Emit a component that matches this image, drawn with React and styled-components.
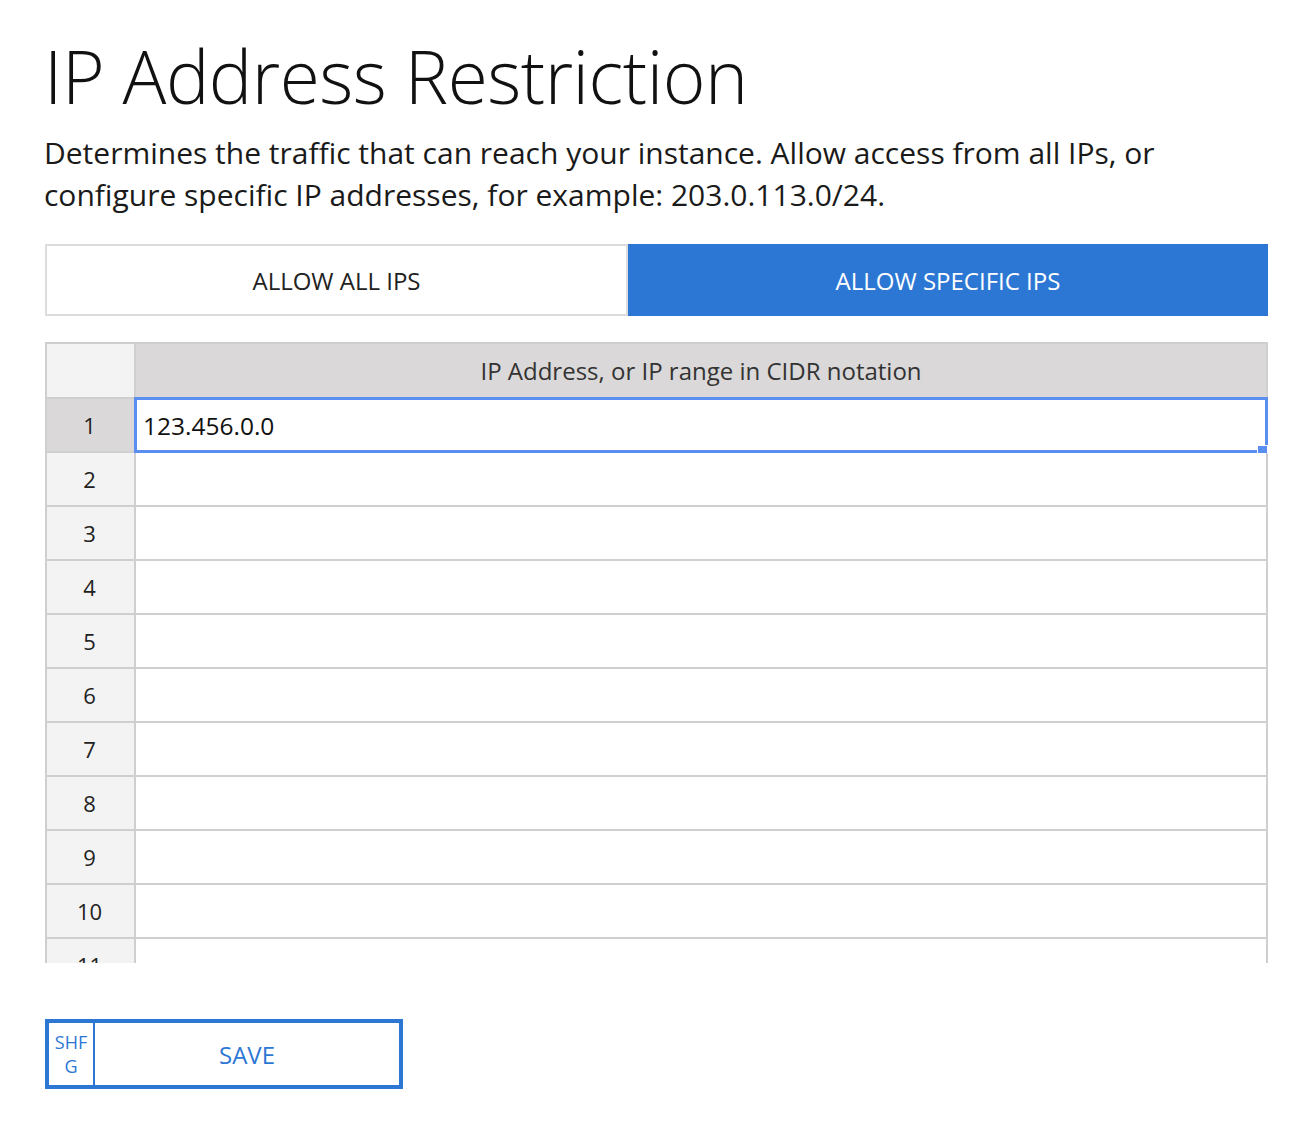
import React, { useState } from 'react';
import styled, { createGlobalStyle } from 'styled-components';

const GlobalStyle = createGlobalStyle`
  body {
    margin: 0;
    background: #fff;
    font-family: "Open Sans", "Liberation Sans", sans-serif;
    color: #111;
  }
`;

const Page = styled.div`
  padding: 24px 48px 40px 45px;
  display: flex;
  flex-direction: column;
`;

const Title = styled.h1`
  margin: 0 0 0 -1px;
  font-size: 73px;
  font-weight: 300;
  line-height: 104px;
  letter-spacing: -0.5px;
`;

const Description = styled.p`
  margin: 4px 0 0 -1px;
  font-size: 30px;
  font-weight: 400;
  line-height: 42px;
  color: #1a1a1a;
`;

const Toggle = styled.div`
  display: grid;
  grid-template-columns: 583px 1fr;
  margin-top: 28px;
  height: 72px;
`;

const ToggleButton = styled.button`
  font-family: inherit;
  font-size: 24px;
  text-transform: uppercase;
  cursor: pointer;
  border: 2px solid ${(p) => (p.active ? '#2d77d4' : '#dcdcdc')};
  background: ${(p) => (p.active ? '#2d77d4' : '#fff')};
  color: ${(p) => (p.active ? '#fff' : '#222')};
`;

const TableWrap = styled.div`
  margin-top: 26px;
  height: 621px;
  overflow: hidden;
`;

const Grid = styled.div`
  display: grid;
  grid-template-columns: 89px 1fr;
  border-top: 2px solid #cfcfcf;
  border-left: 2px solid #cfcfcf;
`;

const Cell = styled.div`
  height: ${(p) => (p.head ? 53 : 52)}px;
  border-right: 2px solid #cfcfcf;
  border-bottom: 2px solid #cfcfcf;
  display: flex;
  align-items: center;
  font-size: 22px;
  color: #1a1a1a;
  background: #fff;
`;

const CornerCell = styled(Cell)`
  background: #f3f3f3;
`;

const HeaderCell = styled(Cell)`
  background: #dad8d8;
  justify-content: center;
  font-size: 24px;
  color: #333;
`;

const RowHeader = styled(Cell)`
  justify-content: center;
  padding-right: 2px;
  background: ${(p) => (p.selected ? '#dad8d8' : '#f3f3f3')};
  color: #222;
`;

const DataCell = styled(Cell)`
  position: relative;
  padding-left: 7px;
  font-size: 24.5px;
  color: #111;
`;

const Selection = styled.div`
  position: absolute;
  left: -2px;
  top: -2px;
  right: -2px;
  bottom: -2px;
  border: 3px solid #5a8ef0;
  pointer-events: none;
  &::after {
    content: '';
    position: absolute;
    right: -3px;
    bottom: -6px;
    width: 9px;
    height: 9px;
    background: #5a8ef0;
    border: 1px solid #fff;
  }
`;

const SaveButton = styled.button`
  margin-top: 56px;
  width: 358px;
  height: 70px;
  padding: 0;
  border: 4px solid #2d77d4;
  background: #fff;
  display: flex;
  align-items: stretch;
  cursor: pointer;
  font-family: inherit;
  color: #2d77d4;
`;

const Shortcut = styled.span`
  width: 44px;
  border-right: 2px solid #2d77d4;
  display: flex;
  align-items: center;
  justify-content: center;
  text-align: center;
  font-size: 18px;
  line-height: 24px;
`;

const SaveLabel = styled.span`
  flex: 1;
  display: flex;
  align-items: center;
  justify-content: center;
  font-size: 24px;
`;

const values = ['123.456.0.0', '', '', '', '', '', '', '', '', '', '', ''];

export default function App() {
  const [mode, setMode] = useState('specific');

  return (
    <>
      <GlobalStyle />
      <Page>
        <Title>IP Address Restriction</Title>
        <Description>
          Determines the traffic that can reach your instance. Allow access from all IPs, or
          <br />
          configure specific IP addresses, for example: 203.0.113.0/24.
        </Description>
        <Toggle>
          <ToggleButton active={mode === 'all'} onClick={() => setMode('all')}>
            Allow all IPs
          </ToggleButton>
          <ToggleButton active={mode === 'specific'} onClick={() => setMode('specific')}>
            Allow specific IPs
          </ToggleButton>
        </Toggle>
        <TableWrap>
          <Grid>
            <CornerCell head />
            <HeaderCell head>IP Address, or IP range in CIDR notation</HeaderCell>
            {values.map((v, i) => (
              <React.Fragment key={i}>
                <RowHeader selected={i === 0}>{i + 1}</RowHeader>
                <DataCell>
                  {v}
                  {i === 0 && <Selection />}
                </DataCell>
              </React.Fragment>
            ))}
          </Grid>
        </TableWrap>
        <SaveButton>
          <Shortcut>SHF G</Shortcut>
          <SaveLabel>SAVE</SaveLabel>
        </SaveButton>
      </Page>
    </>
  );
}
